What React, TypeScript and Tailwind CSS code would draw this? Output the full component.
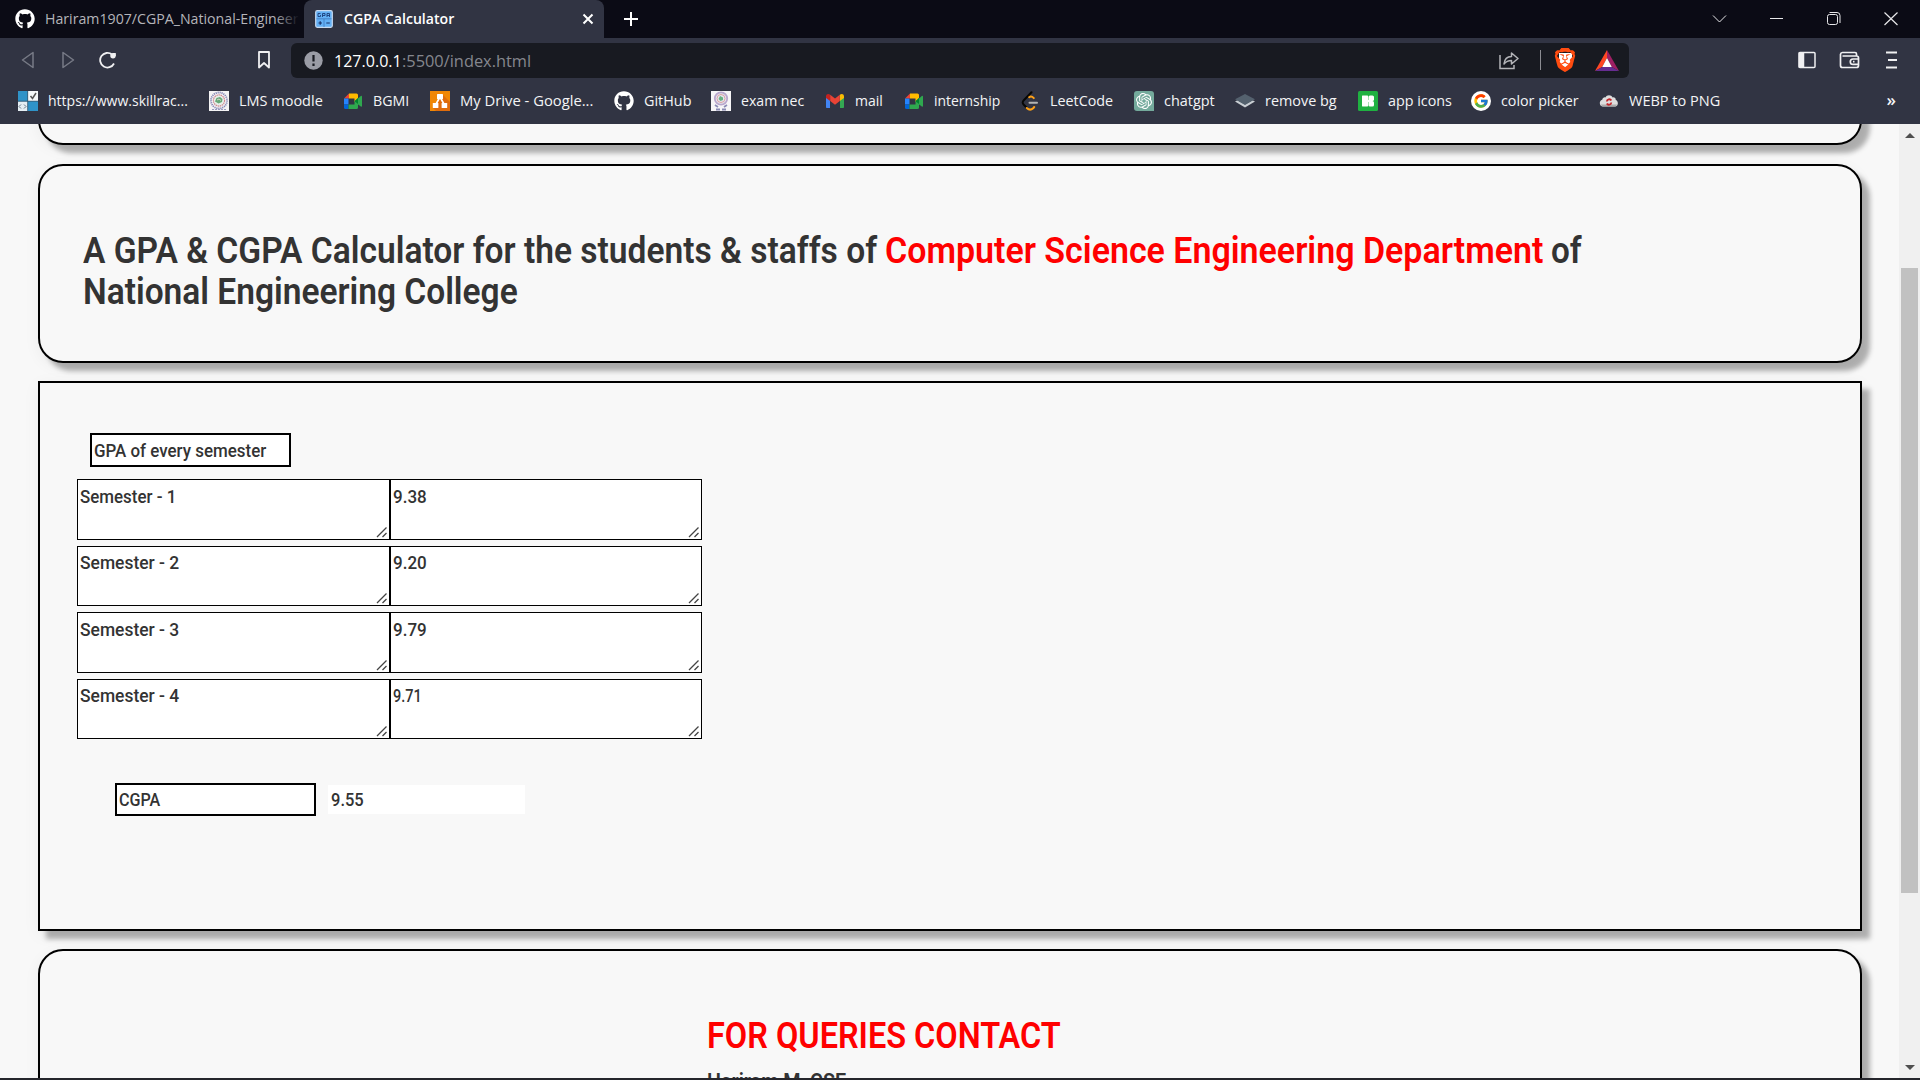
import { useLayoutEffect, useRef, useState, type ReactNode } from "react";
import { SiBrave, SiOpenai } from "react-icons/si";
import { FaGithub } from "react-icons/fa";
import { FcGoogle } from "react-icons/fc";

const UI = "font-['Open_Sans',sans-serif]";
const PAGE = "font-[Roboto,sans-serif]";

/* One line of text, condensed or widened to a fixed advance. */
function Fit({ w, className = "", children }: { w: number; className?: string; children: ReactNode }) {
  const ref = useRef<HTMLSpanElement>(null);
  const [scale, setScale] = useState(1);
  useLayoutEffect(() => {
    if (ref.current && ref.current.offsetWidth) setScale(w / ref.current.offsetWidth);
  }, [w]);
  return (
    <span className={"inline-block shrink-0 whitespace-nowrap " + className} style={{ width: w }}>
      <span ref={ref} className="inline-block origin-left" style={{ transform: `scaleX(${scale})` }}>
        {children}
      </span>
    </span>
  );
}

const SkillIcon = () => (
  <svg width="20" height="20" viewBox="0 0 20 20">
    <rect width="20" height="20" fill="#2f93c8" />
    <rect x="10" width="10" height="10" fill="#f4f8fa" />
    <rect y="10.500" width="9.500" height="9.500" fill="#e6eef3" />
    <path d="M12.500 5l2 2.500L18 2" stroke="#555" strokeWidth="1.500" fill="none" />
    <path d="M3 13.500L1 15.500l2 2M6 13.500l2 2-2 2" stroke="#678" fill="none" />
    <path d="M9.700 0v20M0 10.200h20" stroke="#3a4a5a" strokeWidth=".7" />
  </svg>
);
const MoodleIcon = () => (
  <svg width="20" height="20" viewBox="0 0 20 20">
    <rect width="20" height="20" fill="#f4f3f4" />
    <circle cx="10" cy="9.500" r="8" fill="none" stroke="#8585b5" strokeWidth="1.800" strokeDasharray="1.200 .8" />
    <circle cx="10" cy="9.500" r="5.600" fill="#e6efe9" stroke="#cf8590" strokeWidth="1.200" strokeDasharray="1.500 .6" />
    <path d="M6 10.500l1.500-3.500 3.500-1 2.500 2-.5 3-3.500 1.500z" fill="#66a878" />
    <path d="M8 9l2-1 2 1.500" stroke="#d8d8c8" fill="none" />
    <path d="M3 18.500h14" stroke="#9a9ac0" strokeDasharray="2 1" />
  </svg>
);
const ExamIcon = () => (
  <svg width="20" height="20" viewBox="0 0 20 20">
    <rect width="20" height="20" fill="#f6f5f7" />
    <circle cx="10" cy="7.500" r="6.200" fill="#e3e7ee" stroke="#b9a6cd" strokeWidth="1.800" />
    <circle cx="10" cy="7.500" r="4" fill="none" stroke="#dda0a4" />
    <path d="M7.500 8l1.500-3 3 1.500 0 2.500-2.500 1z" fill="#69b184" />
    <path d="M4 14l3 2M16 14l-3 2M5 18.500h4M11 18.500h4" stroke="#8a8ab5" strokeWidth="1.800" />
  </svg>
);
const MeetIcon = () => (
  <svg width="20" height="20" viewBox="0 0 20 20">
    <path d="M1 7.500L6 2.500V7.500z" fill="#ea4335" />
    <path d="M1 7.500h4.500v6H1z" fill="#2684fc" />
    <path d="M1 13.500h4.500V18H2.500A1.500 1.500 0 011 16.500z" fill="#0066da" />
    <path d="M6 2.500h7.500A1.500 1.500 0 0115 4v6l-3.500 1V7.500H6z" fill="#ffba00" />
    <path d="M5.500 13.500h6V10L15 7v9.500a1.500 1.500 0 01-1.500 1.500h-8z" fill="#2fa84f" />
    <path d="M14.500 8l3.300-3c.5-.4 1.200-.1 1.200.6v9.300c0 .7-.7 1-1.200.6L14.500 13z" fill="#2fa84f" />
    <path d="M11.500 10.300L15 7v6z" fill="#00832d" />
  </svg>
);
const DrawIcon = () => (
  <svg width="20" height="20" viewBox="0 0 20 20">
    <rect width="20" height="20" fill="#f08705" />
    <path d="M13 4l7 7v9H6l-3-3z" fill="#df6c0c" />
    <path d="M10 6L5.500 14M10 6l4.500 8" stroke="#fff" strokeWidth="1.700" />
    <rect x="7" y="3" width="6" height="5" rx=".6" fill="#fff" />
    <rect x="2.800" y="12" width="5.600" height="5" rx=".6" fill="#fff" />
    <rect x="11.600" y="12" width="5.600" height="5" rx=".6" fill="#fff" />
  </svg>
);
const GmailIcon = () => (
  <svg width="20" height="20" viewBox="0 0 20 20">
    <path d="M1 5v11c0 .6.500 1 1 1h3V9z" fill="#4285f4" />
    <path d="M19 5v11c0 .6-.5 1-1 1h-3V9z" fill="#34a853" />
    <path d="M1 5.500C1 3.200 3.300 2.400 5.200 3.800V10L1 6.900z" fill="#c5221f" />
    <path d="M19 5.500c0-2.300-2.300-3.100-4.200-1.700V10L19 6.900z" fill="#fbbc04" />
    <path d="M5.200 3.800L10 7.500l4.800-3.700V10L10 13.700 5.200 10z" fill="#ea4335" />
  </svg>
);
const LeetIcon = () => (
  <svg width="20" height="20" viewBox="0 0 20 20" fill="none" strokeLinecap="round" strokeWidth="2">
    <path d="M11.500 1.200L3.800 9.200c-1.500 1.500-1.500 3 0 4.500l3 3" stroke="#070706" />
    <path d="M9.200 6.200c1.500-1.200 3-.8 4.600.9M6.800 17c2 2 4.500 2 6.400.2l1-1.200" stroke="#ffa116" />
    <path d="M9.500 11.700h7.500" stroke="#b3b3b3" />
  </svg>
);
const ChatIcon = () => (
  <span className="flex size-5 items-center justify-center rounded-[3px] rounded-br-none bg-[#74aa9c]">
    <SiOpenai className="size-4 text-white" />
  </span>
);
const LayersIcon = () => (
  <svg width="20" height="20" viewBox="0 0 20 20">
    <path d="M0 10.500l2.500-1.200L10 13.500l7.500-4.200L20 10.500l-10 6z" fill="#c9ced3" />
    <path d="M10 3l10 5.300-10 5.700L0 8.300z" fill="#54616e" />
  </svg>
);
const Icons8 = () => (
  <svg width="20" height="20" viewBox="0 0 20 20">
    <rect width="20" height="20" rx="1.500" fill="#1fb141" />
    <rect x="4" y="4.500" width="6" height="11" rx=".4" fill="#fff" />
    <rect x="10.400" y="4.500" width="5.600" height="5.500" rx="1.600" fill="#fff" />
    <rect x="10.400" y="10" width="5.600" height="5.500" rx="1.600" fill="#fff" />
    <rect x="9.500" y="9" width="4.500" height="2" fill="#fff" />
  </svg>
);
const GoogleIcon = () => (
  <span className="flex size-5 items-center justify-center rounded-full bg-white">
    <FcGoogle className="size-4" />
  </span>
);
const CloudIcon = () => (
  <svg width="20" height="20" viewBox="0 0 20 20">
    <path d="M4 15.500a3.500 3.500 0 01-.8-6.800C3.500 7 5 6 6.500 6.400 7.500 3.500 12.500 3.500 13.500 6.400c2-.4 3.300.8 3.300 2.500 3 1 2.700 6.600-.8 6.600z" fill="#dedede" />
    <path d="M2 13.500h16c-.5 1.500-1 2-2 2H4c-1 0-1.500-.5-2-2z" fill="#aaa" />
    <path d="M7.800 10.500a2.400 2.400 0 014.500-1M12.300 11.500a2.400 2.400 0 01-4.500 1" fill="none" stroke="#c4252b" strokeWidth="1.800" />
  </svg>
);
const Github = () => <FaGithub className="size-5 text-white" />;

const bookmarks = [
  { icon: <SkillIcon />, label: "https://www.skillrac...", slot: 191, w: 140 },
  { icon: <MoodleIcon />, label: "LMS moodle", slot: 134, w: 84 },
  { icon: <MeetIcon />, label: "BGMI", slot: 87, w: 36 },
  { icon: <DrawIcon />, label: "My Drive - Google...", slot: 184, w: 133 },
  { icon: <Github />, label: "GitHub", slot: 97, w: 47 },
  { icon: <ExamIcon />, label: "exam nec", slot: 114, w: 63 },
  { icon: <GmailIcon />, label: "mail", slot: 79, w: 28 },
  { icon: <MeetIcon />, label: "internship", slot: 116, w: 66 },
  { icon: <LeetIcon />, label: "LeetCode", slot: 114, w: 63 },
  { icon: <ChatIcon />, label: "chatgpt", slot: 101, w: 51 },
  { icon: <LayersIcon />, label: "remove bg", slot: 123, w: 72 },
  { icon: <Icons8 />, label: "app icons", slot: 113, w: 64 },
  { icon: <GoogleIcon />, label: "color picker", slot: 128, w: 78 },
  { icon: <CloudIcon />, label: "WEBP to PNG", slot: 122, w: 91 },
];

function TabStrip() {
  return (
    <div className="flex h-[38px] bg-[#0b0b15]">
      <div className="flex w-[304px] items-center gap-[10px] pl-[15px]">
        <FaGithub className="size-5 shrink-0 text-white" />
        <div className="relative mb-[2px] w-[254px] overflow-hidden">
          <Fit w={253} className="text-[15px] text-[#b5b5ba]">Hariram1907/CGPA_National-Engineer</Fit>
          <div className="absolute inset-y-0 right-0 w-6 bg-linear-to-r from-transparent to-[#0b0b15]" />
        </div>
      </div>
      <div className="flex w-[300px] items-center rounded-t-[8px] bg-[#313443] pl-[11px]">
        <svg width="18" height="18" viewBox="0 0 18 18">
          <rect x=".7" y=".7" width="16.600" height="16.600" rx="1.500" fill="#63b0f5" stroke="#c8daf0" strokeWidth="1.200" />
          <path d="M5.500 3.500H3v3h2.500V5M7.500 7V3.500H10v2H7.500M12 7V3.500H14.500V7M12 5.500h2.500" fill="none" stroke="#1d3e7a" strokeWidth=".9" />
          <path d="M1.500 8.800h15M9 9v8" stroke="#3f78bd" strokeWidth=".8" />
          <path d="M3.500 13h3.500M5.200 11.300v3.400M11.300 13h3.500" stroke="#183066" strokeWidth="1.200" />
        </svg>
        <Fit w={110} className="mb-[2px] ml-[11px] text-[15px] font-semibold text-white">CGPA Calculator</Fit>
        <svg width="12" height="12" viewBox="0 0 12 12" className="ml-[128px]">
          <path d="M1.500 1.500l9 9M10.500 1.500l-9 9" stroke="#fff" strokeWidth="2" />
        </svg>
      </div>
      <div className="flex flex-1 items-center pl-[20px]">
        <svg width="14" height="14" viewBox="0 0 14 14">
          <path d="M7 0v14M0 7h14" stroke="#fff" strokeWidth="2" />
        </svg>
      </div>
      <div className="flex items-center text-[#e8e8ea]">
        <svg width="57" height="38" viewBox="0 0 57 38" fill="none" stroke="currentColor">
          <path d="M22 15.500l6.500 6.500 6.500-6.500" />
        </svg>
        <svg width="57" height="38" viewBox="0 0 57 38" fill="none" stroke="currentColor">
          <path d="M22 18.500h13" />
        </svg>
        <svg width="57" height="38" viewBox="0 0 57 38" fill="none" stroke="currentColor">
          <rect x="22.500" y="14.500" width="10" height="10" rx="2" />
          <path d="M24.500 12.500h7.500a3 3 0 013 3v7.500" />
        </svg>
        <svg width="58" height="38" viewBox="0 0 58 38" fill="none" stroke="currentColor" strokeWidth="1.200">
          <path d="M22.500 12.500l13 12.500M35.500 12.500l-13 12.500" />
        </svg>
      </div>
    </div>
  );
}

function Toolbar() {
  return (
    <div className="flex h-[44px] items-center text-[#f0f0f2]">
      <svg width="13" height="18" viewBox="0 0 13 18" className="ml-[21px]" fill="none" stroke="#777a86" strokeWidth="1.500">
        <path d="M12 1.500v15L1.500 9z" strokeLinejoin="round" />
      </svg>
      <svg width="13" height="18" viewBox="0 0 13 18" className="ml-[28px]" fill="none" stroke="#777a86" strokeWidth="1.500">
        <path d="M1 1.500v15L11.500 9z" strokeLinejoin="round" />
      </svg>
      <svg width="19" height="18" viewBox="0 0 19 18" className="ml-[23px]" fill="none" stroke="currentColor" strokeWidth="1.800">
        <path d="M16 12.500A7.300 7.300 0 1114 3.500" />
        <circle cx="15" cy="4.700" r="2.700" fill="currentColor" stroke="none" />
        <path d="M15 2h2.800v3H15z" fill="currentColor" stroke="none" />
      </svg>
      <svg width="14" height="18" viewBox="0 0 14 18" className="ml-[140px]" fill="none" stroke="currentColor" strokeWidth="1.800">
        <path d="M2 1h10v15.500l-5-4.500-5 4.500z" strokeLinejoin="round" />
      </svg>
      <div className="ml-[20px] flex h-[35px] w-[1338px] items-center rounded-[6px] bg-[#181a21] pl-[13px]">
        <svg width="19" height="19" viewBox="0 0 19 19">
          <circle cx="9.500" cy="9.500" r="9.200" fill="#9a9ca5" />
          <path d="M9.500 4v6.500M9.500 12.500v2.500" stroke="#181a21" strokeWidth="2.200" />
        </svg>
        <Fit w={68} className="mt-px ml-[11px] text-[17px] text-white">127.0.0.1</Fit>
        <Fit w={129} className="mt-px text-[17px] text-[#85878e]">:5500/index.html</Fit>
        <div className="ml-auto flex items-center">
          <svg width="20" height="20" viewBox="0 0 20 20" fill="none" stroke="#b3b4b8" strokeWidth="1.500">
            <path d="M1 5v13.500h14V15" />
            <path d="M5 14c.5-5 3-7.500 7.500-7.500V3L19 8.500l-6.500 5.500v-3.500C9 10.500 7 11.500 5 14z" strokeLinejoin="round" />
          </svg>
          <div className="ml-[21px] h-5 w-px bg-[#8b8c92]" />
          <div className="relative ml-[12px] flex size-[24px] items-center justify-center">
            <div className="absolute h-[14px] w-[13px] rounded-b-[6px] bg-white" />
            <SiBrave className="relative size-[24px] text-[#ff4c10]" />
          </div>
          <svg width="24" height="21" viewBox="0 0 24 21" className="mr-[10px] ml-[18px]">
            <path d="M12 0L0 21l7.200-4L12 8z" fill="#ff4724" />
            <path d="M12 0l12 21-7.200-4L12 8z" fill="#9e1f63" />
            <path d="M0 21h24l-7.200-4H7.200z" fill="#662d91" />
            <path d="M12 8l4.800 9H7.200z" fill="#fff" />
          </svg>
        </div>
      </div>
      <svg width="18" height="18" viewBox="0 0 18 18" className="ml-[169px]" fill="none" stroke="currentColor" strokeWidth="1.500">
        <rect x="1" y="1.500" width="16" height="15" rx="1" />
        <path d="M1.500 2h4v14h-4z" fill="currentColor" />
      </svg>
      <svg width="21" height="18" viewBox="0 0 21 18" className="ml-[23px]" fill="none" stroke="currentColor" strokeWidth="1.700">
        <path d="M17.500 5V3a1.500 1.500 0 00-1.500-1.500H3.500A2 2 0 001.500 3.300V14.500a2 2 0 002 2h14a2 2 0 002-2V7a2 2 0 00-2-2h-14" />
        <path d="M19.500 8h-5.500a2.700 2.700 0 000 5.400h5.500M14 10.700h1.500" />
      </svg>
      <svg width="12" height="18" viewBox="0 0 12 18" className="ml-[26px]" stroke="currentColor" strokeWidth="2">
        <path d="M0 1.500h11M2 9h9M0 16.500h11" />
      </svg>
    </div>
  );
}

function BookmarkBar() {
  return (
    <div className="flex h-[42px] items-center pb-[4px] pl-[18px] text-[15px] text-[#f4f4f6]">
      {bookmarks.map((b) => (
        <div key={b.label} className="flex shrink-0 items-center gap-[10px]" style={{ width: b.slot }}>
          <span className="flex size-5 shrink-0 items-center justify-center">{b.icon}</span>
          <Fit w={b.w} className="mb-[2px] leading-[20px]">{b.label}</Fit>
        </div>
      ))}
      <span className="mr-[24px] mb-[3px] ml-auto text-[17px] leading-[20px] font-semibold">»</span>
    </div>
  );
}

const box = "shrink-0 border-2 border-black bg-[#f8f8f8] shadow-[8px_8px_5px_rgba(0,0,0,0.29),0_4px_16px_rgba(0,0,0,0.05)]";

function Cell({ text, w, pad }: { text: string; w: number; pad: string }) {
  return (
    <div className={"relative flex items-start border border-black bg-white pl-[2px] " + pad}>
      <Fit w={w} className="text-[18.5px] leading-[24px]">{text}</Fit>
      <svg width="12" height="12" viewBox="0 0 12 12" className="absolute right-[1px] bottom-[1px]" stroke="#444" strokeWidth="1.300">
        <path d="M1 11L10.500 1.500M6.500 11L10.500 7" />
      </svg>
    </div>
  );
}

const semesters = [
  { name: "Semester - 1", nameW: 96, gpa: "9.38", gpaW: 34, row: "h-[61px] mb-[6px]", pad: "pt-[5px]" },
  { name: "Semester - 2", nameW: 99, gpa: "9.20", gpaW: 34, row: "h-[60px] mb-[6px]", pad: "pt-[4px]" },
  { name: "Semester - 3", nameW: 99, gpa: "9.79", gpaW: 34, row: "h-[61px] mb-[6px]", pad: "pt-[5px]" },
  { name: "Semester - 4", nameW: 99, gpa: "9.71", gpaW: 29, row: "h-[60px]", pad: "pt-[4px]" },
];

function PageBody() {
  return (
    <div className={PAGE + " flex h-full w-[1899px] flex-col overflow-hidden bg-[#f8f8f8] pr-[37px] pl-[38px] text-[#333]"}>
      <div className={box + " -mt-[39px] h-[60px] rounded-[25px]"} />
      <div className={box + " mt-[19px] h-[199px] rounded-[25px] px-[43px] pt-[64px] text-[36.500px] leading-[41px] font-semibold"}>
        <div className="flex">
          <Fit w={794}>A GPA &amp; CGPA Calculator for the students &amp; staffs of</Fit>
          <Fit w={658} className="ml-[8px] text-[#f00]">Computer Science Engineering Department</Fit>
          <Fit w={31} className="ml-[8px]">of</Fit>
        </div>
        <div className="flex">
          <Fit w={435}>National Engineering College</Fit>
        </div>
      </div>
      <div className={box + " mt-[18px] h-[550px] pl-[37px] font-medium"}>
        <div className="mt-[50px] ml-[13px] flex h-[34px] w-[201px] items-center border-2 border-black bg-white pt-[3px] pl-[2px] text-[18.500px]">
          <Fit w={172}>GPA of every semester</Fit>
        </div>
        <div className="mt-[12px] w-[625px]">
          {semesters.map((s) => (
            <div key={s.name} className={"grid grid-cols-[313px_312px] " + s.row}>
              <Cell text={s.name} w={s.nameW} pad={s.pad} />
              <Cell text={s.gpa} w={s.gpaW} pad={s.pad} />
            </div>
          ))}
        </div>
        <div className="mt-[44px] ml-[38px] flex items-center text-[18.500px]">
          <div className="flex h-[33px] w-[201px] items-center border-2 border-black bg-white pt-[2px] pl-[2px]">
            <Fit w={41}>CGPA</Fit>
          </div>
          <div className="ml-[12px] flex h-[29px] w-[197px] items-center bg-white pt-[2px] pl-[3px]">
            <Fit w={33}>9.55</Fit>
          </div>
        </div>
      </div>
      <div className={box + " mt-[18px] flex h-[300px] flex-col items-start rounded-[25px] pt-[64px] pl-[667px] font-semibold"}>
        <Fit w={354} className="text-[36.500px] leading-[41px] text-[#f00]">FOR QUERIES CONTACT</Fit>
        <Fit w={139} className="mt-[13px] text-[22px] leading-[26px]">Hariram M, CSE</Fit>
      </div>
    </div>
  );
}

function Scrollbar() {
  return (
    <div className="flex flex-1 flex-col items-center bg-[#f0f0f0]">
      <svg width="10" height="6" viewBox="0 0 10 6" className="mt-[8px]"><path d="M0 6l5-5 5 5z" fill="#4f4f4f" /></svg>
      <div className="mt-[130px] h-[625px] w-[17px] bg-[#c1c1c1]" />
      <svg width="10" height="6" viewBox="0 0 10 6" className="mt-auto mb-[7px]"><path d="M0 0l5 5 5-5z" fill="#4f4f4f" /></svg>
    </div>
  );
}

export default function App() {
  return (
    <div className="flex h-[1080px] w-[1920px] flex-col overflow-hidden bg-[#f8f8f8]">
      <header className={UI + " h-[124px] shrink-0 bg-[#313443]"}>
        <TabStrip />
        <Toolbar />
        <BookmarkBar />
      </header>
      <main className="flex h-[954px] shrink-0">
        <PageBody />
        <Scrollbar />
      </main>
      <div className="h-[2px] bg-[#25262c]" />
    </div>
  );
}
